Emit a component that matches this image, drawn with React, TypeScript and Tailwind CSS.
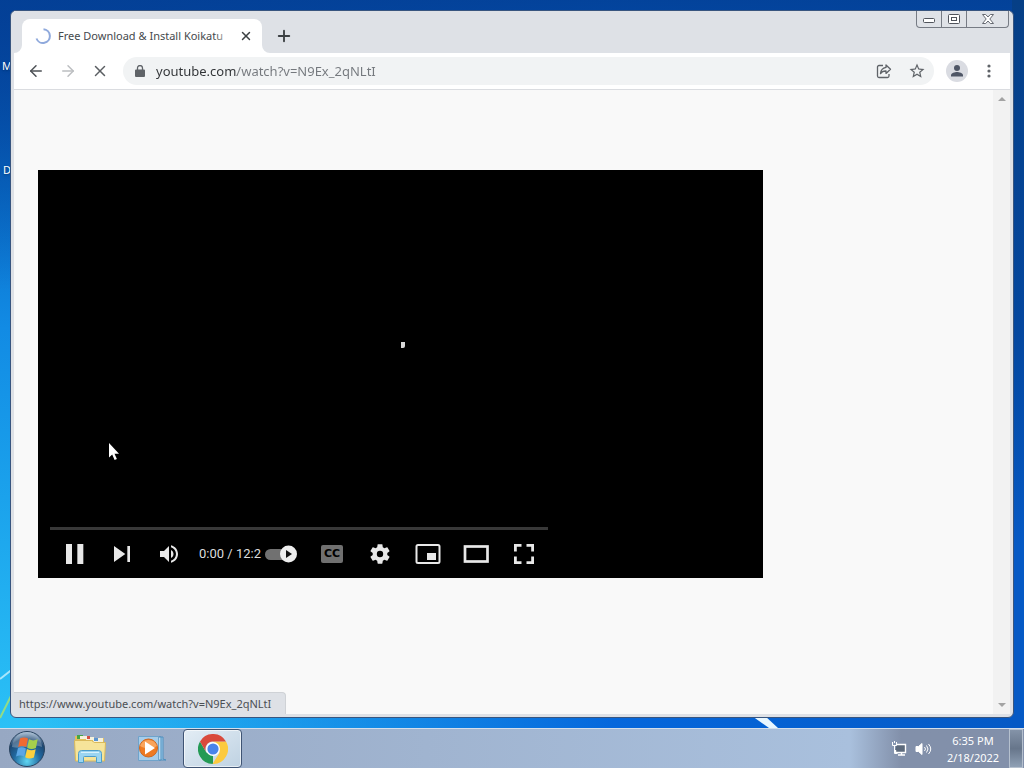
import type { ReactNode } from "react";
import { ArrowLeft, ArrowRight, Plus, X } from "lucide-react";

const pageUrl = "youtube.com/watch?v=N9Ex_2qNLtI";

function WindowButtons() {
  return (
    <div className="ml-auto mr-px flex h-[17px] shrink-0 self-start rounded-b-[4px] border border-t-0 border-[#767b84] bg-[#dfe2e7]">
      <button aria-label="Minimize" className="flex w-[25px] items-center justify-center border-r border-[#767b84]">
        <svg width="14" height="16" viewBox="0 0 14 16" fill="#fff" stroke="#50545c">
          <rect x="1.5" y="7.5" width="11" height="4" rx="1" />
        </svg>
      </button>
      <button aria-label="Restore" className="flex w-[25px] items-center justify-center border-r border-[#767b84]">
        <svg width="14" height="16" viewBox="0 0 14 16" fill="#fff" stroke="#50545c">
          <rect x="1.5" y="3.5" width="11" height="9" rx="1" />
          <rect x="4.5" y="6.5" width="5" height="3" />
        </svg>
      </button>
      <button aria-label="Close window" className="flex w-[41px] items-center justify-center">
        <svg width="14" height="16" viewBox="0 0 14 16" fill="#fff" stroke="#666a72" strokeLinejoin="round">
          <path d="M1.5 3.5h3.2L7 6l2.300-2.500h3.200L8.800 8l3.700 4.500H9.300L7 10l-2.300 2.500H1.500L5.200 8z" />
        </svg>
      </button>
    </div>
  );
}

function TabStrip() {
  return (
    <div className="flex h-[42px] items-end bg-[#dee1e6]">
      <div className="relative ml-2 flex h-[34px] w-60 items-center rounded-t-lg bg-white pl-[13px] pr-2">
        <svg className="absolute -left-2 bottom-0" width="8" height="8" viewBox="0 0 8 8" fill="#fff">
          <path d="M8 0v8H0a8 8 0 0 0 8-8z" />
        </svg>
        <svg className="absolute -right-2 bottom-0" width="8" height="8" viewBox="0 0 8 8" fill="#fff">
          <path d="M0 0v8h8a8 8 0 0 1-8-8z" />
        </svg>
        <svg width="16" height="16" viewBox="0 0 16 16" fill="none" stroke="#8fa9dc" strokeWidth="2">
          <path d="M8.500 1.200A6.900 6.900 0 1 1 1.500 10.500" />
        </svg>
        <div className="relative ml-[7px] w-[173px] whitespace-nowrap text-[11px] leading-4 text-[#45494d]">
          Free Download &amp; Install Koikatu
          <span className="absolute inset-y-0 right-0 w-4 bg-linear-to-r from-white/0 to-white" />
        </div>
        <button aria-label="Close tab" className="ml-auto flex size-4 items-center justify-center text-[#3c4043]">
          <X size={14} strokeWidth={2.500} />
        </button>
      </div>
      <button aria-label="New tab" className="mb-2 ml-[13px] text-[#3c4043]">
        <Plus size={18} strokeWidth={2.500} />
      </button>
      <WindowButtons />
    </div>
  );
}

function Toolbar() {
  return (
    <div className="flex h-[37px] items-center border-b border-[#dadce0] bg-white px-[13px] text-[#5f6368]">
      <button aria-label="Back" className="text-[#4d5156]">
        <ArrowLeft size={18} />
      </button>
      <button aria-label="Forward" className="ml-[14px] text-[#bcbec1]">
        <ArrowRight size={18} />
      </button>
      <button aria-label="Stop loading" className="ml-[14px] text-[#5a5e62]">
        <X size={18} />
      </button>
      <div className="ml-[14px] flex h-7 flex-1 items-center rounded-full bg-[#f1f3f4] pl-3 pr-2">
        <svg width="10" height="12" viewBox="0 0 10 12" fill="#5f6368">
          <path d="M1 4.500h8a1 1 0 0 1 1 1V11a1 1 0 0 1-1 1H1a1 1 0 0 1-1-1V5.500a1 1 0 0 1 1-1z" />
          <path d="M2.500 5V3a2.500 2.500 0 0 1 5 0v2" fill="none" stroke="#5f6368" strokeWidth="1.300" />
        </svg>
        <input
          aria-label="Address"
          defaultValue={pageUrl}
          className="ml-[11px] min-w-0 flex-1 bg-linear-to-r from-[#303336] from-[81px] to-[#74787d] to-[81px] bg-clip-text text-[13px] leading-5 text-transparent outline-none"
        />
        <button aria-label="Share this page">
          <svg width="16" height="16" viewBox="0 0 16 16" fill="none" stroke="#5f6368" strokeWidth="1.300" strokeLinejoin="round">
            <path d="M7 2.500H3A1.500 1.500 0 0 0 1.500 4v9A1.500 1.500 0 0 0 3 14.500h8.500A1.500 1.500 0 0 0 13 13v-2" />
            <path d="M10 2l4.500 4.200L10 10.400V8c-2.500-.1-4.300.7-5.500 2.600.3-3.300 2-5.600 5.500-6.200z" />
          </svg>
        </button>
        <button aria-label="Bookmark this page" className="ml-4">
          <svg width="18" height="18" viewBox="0 0 24 24" fill="#5f6368">
            <path d="M22 9.240l-7.190-.62L12 2 9.190 8.630 2 9.240l5.460 4.730L5.820 21 12 17.270 18.180 21l-1.630-7.030L22 9.240zM12 15.400l-3.760 2.270 1-4.280-3.320-2.880 4.380-.38L12 6.100l1.710 4.040 4.380.38-3.320 2.880 1 4.280L12 15.400z" />
          </svg>
        </button>
      </div>
      <button aria-label="Profile" className="ml-3 rounded-full bg-[#dadce2]">
        <svg width="22" height="22" viewBox="0 0 22 22" fill="#4f5666">
          <circle cx="11" cy="8" r="3" />
          <path d="M5 16.500v-1.400c0-2 4-3.100 6-3.100s6 1.100 6 3.100v1.400z" />
        </svg>
      </button>
      <button aria-label="Menu" className="ml-[13px]">
        <svg width="16" height="16" viewBox="0 0 16 16" fill="#5f6368">
          <circle cx="8" cy="3" r="1.600" />
          <circle cx="8" cy="8" r="1.600" />
          <circle cx="8" cy="13" r="1.600" />
        </svg>
      </button>
    </div>
  );
}

function PlayerButton({ label, children }: { label: string; children: ReactNode }) {
  return (
    <button aria-label={label} className="flex size-12 shrink-0 items-center justify-center">
      {children}
    </button>
  );
}

function PlayerControls() {
  return (
    <div className="absolute bottom-0 left-3">
      <div className="h-[3px] bg-[#383838]" />
      <div className="flex h-12 items-center text-[#e8e8e8]">
        <PlayerButton label="Pause">
          <svg width="48" height="48" viewBox="0 0 36 36" fill="currentColor">
            <path d="M12 25.500h4.500v-15H12zM20.500 25.500H25v-15h-4.500z" />
          </svg>
        </PlayerButton>
        <PlayerButton label="Next">
          <svg width="48" height="48" viewBox="0 0 36 36" fill="currentColor">
            <path d="M12 24l8.500-6L12 12v12zM22 12v12h2V12h-2z" />
          </svg>
        </PlayerButton>
        <PlayerButton label="Mute">
          <svg width="36" height="36" viewBox="0 0 36 36" fill="currentColor">
            <path d="M8 21h4l5 5V10l-5 5H8v6zM19 14v8c1.480-.68 2.500-2.230 2.500-4s-1.020-3.260-2.500-4zM19 11.290c2.890.86 5 3.540 5 6.710s-2.110 5.850-5 6.710v2.060c4.010-.91 7-4.490 7-8.770s-2.990-7.860-7-8.770z" />
          </svg>
        </PlayerButton>
        <div className="w-[66px] whitespace-nowrap pl-[5px] font-[Roboto,sans-serif] text-[13px] leading-5 text-[#dddddd]">
          0:00 / 12:2
        </div>
        <button role="switch" aria-checked="true" aria-label="Autoplay" className="h-12 w-12">
          <svg width="48" height="48" viewBox="0 0 48 48">
            <rect x="5" y="19" width="28" height="11" rx="5.500" fill="#717171" />
            <circle cx="28.500" cy="24" r="8.500" fill="#eeeeee" />
            <path d="M26 20v8l6-4z" fill="#111" />
          </svg>
        </button>
        <PlayerButton label="Subtitles">
          <span className="flex h-[18px] w-[22px] items-center justify-center rounded-xs bg-[#707070] font-['DejaVu_Sans',sans-serif] text-[11px] font-bold leading-4 text-black">
            CC
          </span>
        </PlayerButton>
        <PlayerButton label="Settings">
          <svg width="44" height="44" viewBox="0 0 36 36" fill="currentColor">
            <path d="M23.940 18.780c.03-.25.05-.51.05-.78s-.02-.52-.05-.78l1.680-1.320c.15-.12.19-.33.09-.51l-1.600-2.760c-.09-.17-.31-.24-.48-.17l-1.990.8c-.41-.32-.86-.58-1.350-.78l-.3-2.120c-.02-.19-.19-.33-.39-.33h-3.200c-.2 0-.36.14-.39.33l-.3 2.120c-.48.2-.93.47-1.350.78l-1.990-.8c-.18-.07-.39 0-.48.17l-1.600 2.760c-.1.17-.05.39.09.51l1.680 1.320c-.03.25-.05.52-.05.78s.02.52.05.78l-1.680 1.320c-.15.12-.19.33-.09.51l1.600 2.760c.09.17.31.24.48.17l1.990-.8c.41.32.86.58 1.350.78l.3 2.120c.02.19.19.33.39.33h3.200c.2 0 .36-.14.39-.33l.3-2.120c.48-.2.93-.47 1.350-.78l1.990.8c.18.07.39 0 .48-.17l1.600-2.760c.09-.17.05-.39-.09-.51l-1.680-1.320zM18 20.600a2.600 2.600 0 1 1 0-5.200 2.600 2.600 0 0 1 0 5.200z" />
          </svg>
        </PlayerButton>
        <PlayerButton label="Miniplayer">
          <svg width="48" height="48" viewBox="0 0 48 48" fill="none" stroke="currentColor" strokeWidth="2">
            <rect x="12.500" y="15" width="23" height="18" rx="1.500" />
            <rect x="23" y="23" width="9" height="7" fill="currentColor" stroke="none" />
          </svg>
        </PlayerButton>
        <PlayerButton label="Theater mode">
          <svg width="48" height="48" viewBox="0 0 48 48" fill="none" stroke="currentColor" strokeWidth="2.700">
            <rect x="13" y="16.500" width="22.500" height="15" />
          </svg>
        </PlayerButton>
        <PlayerButton label="Full screen">
          <svg width="48" height="48" viewBox="0 0 48 48" fill="none" stroke="currentColor" strokeWidth="2.800">
            <path d="M15.400 21.500v-6.100h6.100M26.500 15.400h6.100v6.100M32.600 26.500v6.100h-6.100M21.500 32.600h-6.100v-6.100" />
          </svg>
        </PlayerButton>
      </div>
    </div>
  );
}

function Page() {
  return (
    <div className="relative flex min-h-0 flex-1 bg-[#f9f9f9]">
      <main className="min-w-0 flex-1 pl-6 pt-20">
        <div className="relative aspect-[725/408] w-full max-w-[725px] bg-black">
          <span className="absolute left-[363px] top-[172px] h-[6px] w-1 rounded-br-xs bg-[#d8d8d8]" />
          <svg className="absolute left-[71px] top-[273px]" width="12" height="18" viewBox="0 0 12 18" fill="#fff">
            <path d="M0 0v14.500l3.200-3L5.600 17l2.300-1-2.400-5.300H10z" />
          </svg>
          <PlayerControls />
        </div>
      </main>
      <div className="flex w-[17px] flex-col items-center justify-between bg-[#f2f2f2] py-[7px]">
        <svg width="8" height="4" viewBox="0 0 8 4" fill="#a3a3a3">
          <path d="M0 4l4-4 4 4z" />
        </svg>
        <svg width="8" height="4" viewBox="0 0 8 4" fill="#a3a3a3">
          <path d="M0 0l4 4 4-4z" />
        </svg>
      </div>
      <a
        href={`https://www.${pageUrl}`}
        className="absolute bottom-0 left-0 rounded-tr border-r border-t border-[#cfd2d6] bg-[#dee1e6] pl-[5px] pr-[14px] pt-px text-[11px] leading-5 text-[#4b4f54]"
      >
        https://www.{pageUrl}
      </a>
    </div>
  );
}

function StartOrb() {
  return (
    <svg width="38" height="38" viewBox="0 0 38 38">
      <defs>
        <radialGradient id="orb" cx=".5" cy=".85" r=".85">
          <stop offset="0" stopColor="#5fd6f2" />
          <stop offset=".45" stopColor="#21689f" />
          <stop offset=".75" stopColor="#1d4670" />
          <stop offset="1" stopColor="#9fb9d2" />
        </radialGradient>
      </defs>
      <circle cx="19" cy="19" r="17.500" fill="url(#orb)" stroke="#29435f" />
      <path d="M4 17a15 15 0 0 1 30 0c-8-4-20 3-30 0z" fill="#fff" opacity=".25" />
      <path d="M12 8.500c2.500-1.500 5.500-1.500 8 0L18.200 17c-2.700-1.400-5.500-1.300-8 0z" fill="#ef6a32" />
      <path d="M21 9.300c2.800 1.500 5.600 1.500 8.700 0L27.900 18c-3 1.400-5.900 1.300-8.700-.2z" fill="#a5cf4c" />
      <path d="M9.900 18.300c2.500-1.400 5.300-1.300 8 .1l-1.800 8.200c-2.700-1.400-5.500-1.300-8 0z" fill="#5ba6e6" />
      <path d="M19 19.100c2.800 1.500 5.700 1.600 8.700.2l-1.800 8.200c-3 1.400-5.900 1.300-8.700-.2z" fill="#fcd03f" />
    </svg>
  );
}

function ExplorerIcon() {
  return (
    <svg width="34" height="30" viewBox="0 0 34 30">
      <path d="M2 2h10l2 2h17v23H2z" fill="#e3c05c" />
      <path d="M4 1h6v4H4z" fill="#46a546" />
      <path d="M7 2h7v3H7z" fill="#f5f1dd" />
      <path d="M13 3h8v3h-8z" fill="#f5f1dd" />
      <path d="M14 2h3v3h-3z" fill="#d65041" />
      <path d="M20 4h10v4H20z" fill="#f5f1dd" />
      <path d="M21 4h4v3h-4z" fill="#5b95d0" />
      <path d="M1.500 6.500h17l3 2h11l-1 18.500H2.500z" fill="#f6e49a" stroke="#d9b95a" />
      <path d="M5.500 28.500v-9q0-3 3-3h17q3 0 3 3v9h-5v-5q0-1-1-1h-11q-1 0-1 1v5z" fill="#9bd5f1" stroke="#4c9dcb" />
      <path d="M8 18.500h18" stroke="#d8f2fc" />
    </svg>
  );
}

function MediaPlayerIcon() {
  return (
    <svg width="30" height="28" viewBox="0 0 30 28">
      <path d="M22 2h4v22l3 1h-7z" fill="#9dc9e8" stroke="#4f8fbe" />
      <path d="M19 2h5v23h-5z" fill="#bcdcf0" stroke="#4f8fbe" />
      <path d="M1.500 1.500h20v24h-20z" fill="#a7cde9" stroke="#6fa3cb" />
      <circle cx="11.500" cy="13" r="9" fill="#ee7a22" stroke="#cf661c" />
      <path d="M3 11a9 9 0 0 1 17 0c-5 3-12 3-17 0z" fill="#f9a45c" />
      <path d="M8 6.500v13l10-6.500z" fill="#fff" />
    </svg>
  );
}

function ChromeIcon() {
  return (
    <svg width="30" height="30" viewBox="0 0 30 30">
      <path d="M15 15V30A15 15 0 0 1 2 7.500L8.500 18.700z" fill="#249a55" />
      <path d="M15 7.500h13A15 15 0 0 1 14.500 30l7-11.200z" fill="#fcca3f" />
      <path d="M2 7.500l6.500 11.300A7.500 7.500 0 0 1 15 7.500h13a15 15 0 0 0-26 0z" fill="#d94a3c" />
      <circle cx="15" cy="15" r="7" fill="#fff" />
      <circle cx="15" cy="15" r="5.600" fill="#4a84ea" />
    </svg>
  );
}

function Taskbar() {
  return (
    <footer className="flex h-10 items-center border-t border-[#d3deeb] bg-linear-to-r from-[#97a8c3] from-0% via-[#a9c0dd] via-83% to-[#8290aa] to-88% shadow-[0_-1px_0_#3b4b63]">
      <button aria-label="Start" className="ml-2">
        <StartOrb />
      </button>
      <button aria-label="Windows Explorer" className="ml-[10px] flex w-[68px] justify-center">
        <ExplorerIcon />
      </button>
      <button aria-label="Media Player" className="flex w-14 justify-center">
        <MediaPlayerIcon />
      </button>
      <button
        aria-label="Google Chrome"
        className="ml-[3px] flex h-[39px] w-[59px] items-center justify-center rounded-sm border border-[#3f5474] bg-linear-to-br from-[#e3edf5] to-[#bfd2e2] inset-ring inset-ring-white/60"
      >
        <ChromeIcon />
      </button>
      <div className="ml-auto flex h-full items-center">
        <button aria-label="Network">
          <svg width="16" height="16" viewBox="0 0 16 16" fill="#5d6a7c" stroke="#fff">
            <path d="M5.500 3.500h9v8h-10V9" strokeWidth="1.400" />
            <path d="M7 14h7M10.500 12v2" strokeWidth="1.400" />
            <path d="M1.500 1v3.500h4V1M3.500 0v2M3.500 5v7.500h3" fill="none" />
          </svg>
        </button>
        <button aria-label="Volume" className="ml-2">
          <svg width="17" height="16" viewBox="0 0 17 16" fill="#fff" stroke="#fff">
            <path d="M1 5.500h2.500L7 2.500v11l-3.500-3H1z" />
            <path d="M9.500 6q2 2 0 4M11.500 4.500q3 3.500 0 7M13.500 3q4.500 5 0 10" fill="none" />
          </svg>
        </button>
        <button className="ml-2 w-[66px] whitespace-nowrap text-center text-[11px] leading-[17px] text-white">
          6:35 PM
          <br />
          2/18/2022
        </button>
        <button
          aria-label="Show desktop"
          className="ml-[3px] mr-px h-full w-[14px] border border-[#b5c0ce] bg-linear-to-b from-[#8493a8] via-[#67768b] to-[#8fa0b5]"
        />
      </div>
    </footer>
  );
}

export default function App() {
  return (
    <div className="flex h-screen flex-col overflow-hidden font-['Noto_Sans',sans-serif]">
      <div className="relative flex min-h-0 flex-1 bg-linear-to-b from-[#0745a6] via-[#128be4] via-45% to-[#2bc1f6] p-[10px]">
        <div className="absolute inset-0 bg-linear-to-r from-transparent from-3% via-[#0567dc] via-60% to-[#0559c5]" />
        <div className="absolute inset-0 bg-linear-to-b from-[#033f94]/90 to-transparent to-40%" />
        {/* the wallpaper is darker down the right side */}
        <div className="absolute inset-y-0 right-0 w-3 bg-linear-to-b from-[#063f86] via-[#04479f] via-45% to-[#0559c5] to-75%" />
        <svg className="absolute bottom-0 left-0" width="30" height="80" viewBox="0 0 30 80" fill="none">
          <path d="M0 31L14 20" stroke="#a8e6fb" strokeWidth="2" />
          <path d="M0 70L14 42" stroke="#92dc86" strokeWidth="2" />
        </svg>
        <svg className="absolute bottom-0 left-[752px]" width="30" height="12" viewBox="0 0 30 12" fill="#e9f7ff">
          <path d="M0 0h13l13 12H17z" />
        </svg>
        <span className="absolute left-[2px] top-[58px] text-[11px] leading-4 text-white text-shadow-md">M</span>
        <span className="absolute left-[3px] top-[162px] text-[11px] leading-4 text-white text-shadow-md">D</span>
        <div className="relative flex min-w-0 flex-1 flex-col rounded-md border border-[#38557f] bg-[#dee1e6] px-[3px] pb-[3px]">
          <TabStrip />
          <Toolbar />
          <Page />
        </div>
      </div>
      <Taskbar />
    </div>
  );
}
